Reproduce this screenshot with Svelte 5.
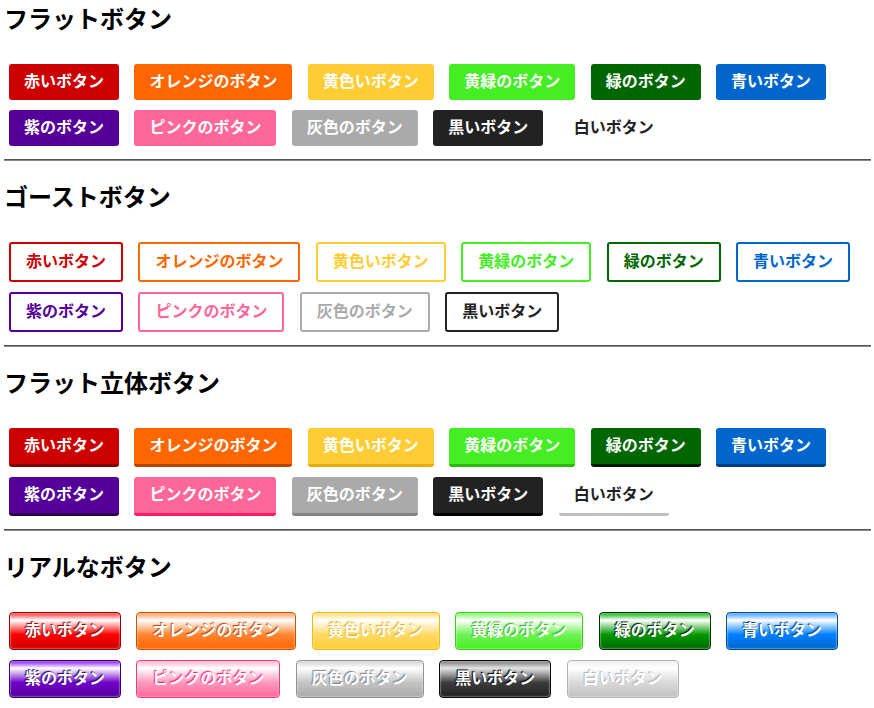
<script>
  const names = {
    red: '赤いボタン',
    orange: 'オレンジのボタン',
    yellow: '黄色いボタン',
    lime: '黄緑のボタン',
    green: '緑のボタン',
    blue: '青いボタン',
    purple: '紫のボタン',
    pink: 'ピンクのボタン',
    gray: '灰色のボタン',
    black: '黒いボタン',
    white: '白いボタン'
  };
  const all = Object.keys(names);
  const sections = [
    { title: 'フラットボタン', kind: 'flat', colors: all },
    { title: 'ゴーストボタン', kind: 'ghost', colors: all.filter((c) => c !== 'white') },
    { title: 'フラット立体ボタン', kind: 'solid', colors: all },
    { title: 'リアルなボタン', kind: 'real', colors: all }
  ];
</script>

<main>
  {#each sections as section, i}
    {#if i > 0}<hr />{/if}
    <section>
      <h2>{section.title}</h2>
      <div class="buttons">
        {#each section.colors as color}
          <button type="button" class="{section.kind} {color}">{names[color]}</button>{' '}
        {/each}
      </div>
    </section>
  {/each}
</main>

<style>
  :global(body) {
    margin: 0;
    background: #fff;
  }
  main {
    padding: 0 3px 0 4px;
    color: #000;
    font-family: "Noto Sans CJK JP", sans-serif;
  }
  h2 {
    margin: 0;
    padding-bottom: 23px;
    font-size: 24px;
    line-height: 36px;
    font-weight: 700;
  }
  hr {
    height: 1px;
    margin: 8px 0 17px;
    border: 0;
    border-top: 1px solid #555;
    background: #888;
  }
  .buttons {
    font: 400 17px/16px "DejaVu Sans", sans-serif;
  }
  button {
    display: inline-block;
    margin: 5px;
    padding: 4px 15px 8px;
    border: 0;
    border-radius: 3px;
    background: var(--base);
    color: #fff;
    font: 700 16px/24px "Noto Sans CJK JP", sans-serif;
    vertical-align: top;
    white-space: nowrap;
    cursor: pointer;
  }
  .red { --base: #c00; --dark: #800000; --glow: #f00; --top: #ff3333; --edge: #990000; }
  .orange { --base: #f60; --dark: #b34700; --glow: #ff8533; --top: #ff944d; --edge: #cc5200; }
  .yellow { --base: #fc3; --dark: #e6ac00; --glow: #ffd966; --top: #ffdb70; --edge: #f5b800; }
  .lime { --base: #4e2; --dark: #2db80f; --glow: #70f255; --top: #7df263; --edge: #34d411; }
  .green { --base: #060; --dark: #001a00; --glow: #090; --top: #00b300; --edge: #030; }
  .blue { --base: #06c; --dark: #004080; --glow: #0080ff; --top: #3399ff; --edge: #004c99; }
  .purple { --base: #509; --dark: #2b004d; --glow: #7000cc; --top: #8811ee; --edge: #3b006b; }
  .pink { --base: #f69; --dark: #ff1a66; --glow: #ff99bb; --top: #ffb3cc; --edge: #ff3377; }
  .gray { --base: #aaa; --dark: #848484; --glow: #c4c4c4; --top: #d0d0d0; --edge: #919191; }
  .black { --base: #222; --dark: #000; --glow: #3c3c3c; --top: #777; --edge: #090909; }
  .white { --base: #fff; --dark: #bfbfbf; --glow: #d9d9d9; --top: #eee; --edge: #b3b3b3; }

  .flat.white,
  .solid.white {
    color: #222;
  }
  .ghost {
    border: 2px solid var(--base);
    background: #fff;
    color: var(--base);
  }
  .solid {
    border-bottom: 3px solid var(--dark);
  }
  .real {
    border: 1px solid var(--edge);
    border-radius: 4px;
    background: linear-gradient(var(--top) 0%, #fff 20%, var(--glow) 60%, var(--base) 100%);
    box-shadow: inset 0 0 2px #fff;
    text-shadow: -1px -1px 1px var(--dark);
  }
  .real.black {
    background: linear-gradient(#777 0%, #e4e4e4 20%, #3c3c3c 60%, #222 100%);
  }
  .real.white {
    --base: #c0c0c0;
    --dark: #b3b3b3;
  }
</style>
